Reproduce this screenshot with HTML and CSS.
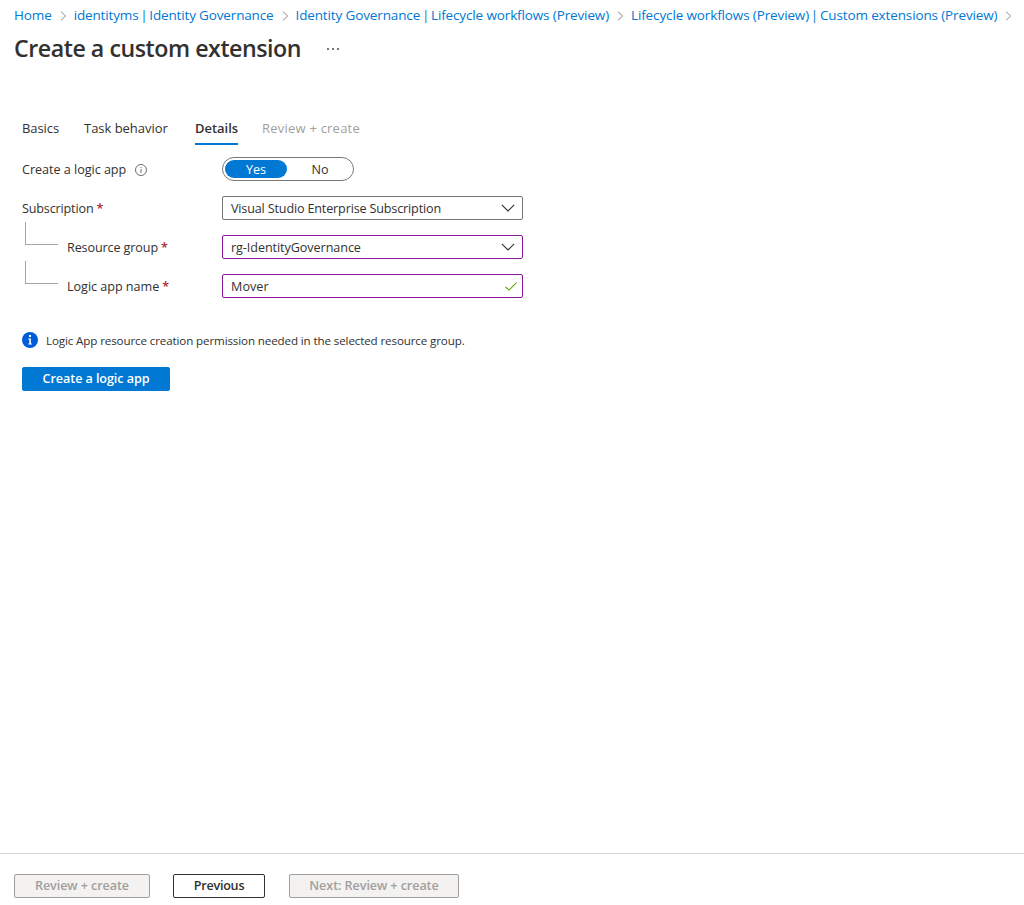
FILE: index.html
```
<!DOCTYPE html>
<html lang="en">
<head>
<meta charset="utf-8">
<title>Create a custom extension</title>
<link rel="stylesheet" href="styles.css">
</head>
<body>
<div class="page">
  <nav class="breadcrumb">
    <a class="crumb crumb-home">Home</a>
    <svg class="sep" viewBox="0 0 7 10"><path d="M1 .7 5.6 5 1 9.3"/></svg>
    <a class="crumb crumb-tenant">identityms <span class="pipe">|</span> Identity Governance</a>
    <svg class="sep" viewBox="0 0 7 10"><path d="M1 .7 5.6 5 1 9.3"/></svg>
    <a class="crumb">Identity Governance <span class="pipe">|</span> Lifecycle workflows (Preview)</a>
    <svg class="sep" viewBox="0 0 7 10"><path d="M1 .7 5.6 5 1 9.3"/></svg>
    <a class="crumb">Lifecycle workflows (Preview) <span class="pipe">|</span> Custom extensions (Preview)</a>
    <svg class="sep" viewBox="0 0 7 10"><path d="M1 .7 5.6 5 1 9.3"/></svg>
  </nav>
  <header class="title-row">
    <h1 class="title">Create a custom extension</h1>
    <svg class="more" viewBox="0 0 12 2"><path d="M0 0h2v2H0zM5 0h2v2H5zM10 0h2v2h-2z"/></svg>
  </header>
  <main class="content">
    <div class="tabs">
      <span class="tab tab-basics">Basics</span>
      <span class="tab tab-task">Task behavior</span>
      <span class="tab tab-details active">Details</span>
      <span class="tab disabled">Review + create</span>
    </div>
    <div class="form">
      <div class="field">
        <div class="label"><span class="t-create">Create a logic app</span>
          <svg class="info-outline" viewBox="0 0 12 12"><circle cx="6" cy="6" r="5.5"/><path d="M6 5v4M6 3v1"/></svg>
        </div>
        <div class="toggle"><span class="option selected">Yes</span><span class="option">No</span></div>
      </div>
      <div class="field">
        <div class="label"><span class="t-tight">Subscription</span><span class="required">*</span></div>
        <div class="select"><span class="t-tight">Visual Studio Enterprise Subscription</span>
          <svg class="chevron" viewBox="0 0 14 8"><path d="M.8.8 7 7 13.2.8"/></svg></div>
      </div>
      <div class="field">
        <div class="label nested"><i class="branch"></i><span class="t-res">Resource group</span><span class="required">*</span></div>
        <div class="select edited"><span class="t-rg">rg-IdentityGovernance</span>
          <svg class="chevron" viewBox="0 0 14 8"><path d="M.8.8 7 7 13.2.8"/></svg></div>
      </div>
      <div class="field">
        <div class="label nested"><i class="branch"></i><span class="t-create">Logic app name</span><span class="required">*</span></div>
        <div class="select edited"><span class="t-mover">Mover</span>
          <svg class="check" viewBox="0 0 12 9"><path d="M.5 4.8 4 8.1 11.5.7"/></svg></div>
      </div>
    </div>
    <div class="notice">
      <svg class="info-solid" viewBox="0 0 16 16"><circle cx="8" cy="8" r="8"/><path d="M6.3 6.4h2.6v5.1h1v1H6.3v-1h1V7.4h-1zM7 3h2v2H7z"/></svg>
      <span>Logic App resource creation permission needed in the selected resource group.</span>
    </div>
    <button class="btn primary">Create a logic app</button>
  </main>
  <footer class="footer">
    <button class="btn muted review">Review + create</button>
    <button class="btn previous">Previous</button>
    <button class="btn muted next">Next: Review + create</button>
  </footer>
</div>
</body>
</html>
```
FILE: styles.css
```
* { box-sizing: border-box; }
body {
  margin: 0;
  background: #fff;
  color: #323130;
  font-family: "Open Sans", "Noto Sans", sans-serif;
  font-size: 12.6px;
  line-height: 18px;
}
svg { display: block; flex: none; fill: none; }
.page { height: 905px; display: flex; flex-direction: column; overflow: hidden; }

.breadcrumb {
  display: flex;
  align-items: center;
  height: 20px;
  margin: 5px 0 0 14px;
  white-space: nowrap;
}
.crumb { color: #0078d4; font-size: 13.5px; letter-spacing: -.13px; }
.crumb-home { letter-spacing: -.12px; }
.crumb-tenant { letter-spacing: -.15px; }
.pipe { margin: 0 -1.6px; }
.sep { width: 7px; height: 10px; margin: 1px 7px 0 8px; stroke: #8a8886; }

.title-row { display: flex; align-items: center; height: 34px; margin: 7px 0 0 14px; }
.title { margin: -2px 0 0; width: 287px; font-size: 23.2px; line-height: 34px; font-weight: 600; letter-spacing: -.46px; white-space: nowrap; }
.more { width: 12px; height: 2px; margin-left: 26px; fill: #797775; }

.content { flex: 1; padding: 52px 22px 0; }
.tabs { display: flex; height: 27px; font-size: 13px; line-height: 20px; white-space: nowrap; }
.tab-basics { width: 62px; letter-spacing: -.09px; }
.tab-task { width: 111px; letter-spacing: -.03px; }
.tab-details { width: 43px; margin-right: 24px; }
.active { font-weight: 600; border-bottom: 2px solid #0078d4; letter-spacing: -.04px; }
.disabled { color: #a19f9d; letter-spacing: .22px; }

.form { display: grid; gap: 15px; margin-top: 12px; }
.field { display: flex; align-items: center; height: 24px; }
.label { width: 200px; height: 24px; display: flex; align-items: center; white-space: nowrap; }
.label span, .select span { padding-top: 2px; }
.nested { padding-left: 3px; }
.branch { width: 33px; height: 23px; margin: -28px 9px 0 0; border: solid #a6a6a6; border-width: 0 0 1px 1px; }
.required { color: #a4262c; margin-left: 3px; font-weight: 600; }
.t-tight { letter-spacing: -.16px; }
.t-create { letter-spacing: -.03px; }
.t-res { letter-spacing: -.12px; }
.t-rg { letter-spacing: -.07px; }
.t-mover { letter-spacing: .05px; }
.info-outline { width: 12px; height: 12px; margin: 1px 0 0 9px; stroke: #605e5c; stroke-width: .9; }

.toggle { width: 132px; height: 24px; padding: 2px; display: flex; border: 1px solid #797775; border-radius: 12px; }
.option { flex: none; width: 62px; height: 18px; line-height: 20px; text-align: center; border-radius: 9px; margin-right: 2px; }
.selected { background: #0078d4; color: #fff; }
.select {
  width: 301px;
  height: 24px;
  padding: 0 8px;
  display: flex;
  align-items: center;
  justify-content: space-between;
  border: 1px solid #797775;
  border-radius: 2px;
  white-space: nowrap;
}
.edited { border-color: #881798; }
.chevron { width: 14px; height: 8px; margin-right: -1px; stroke: #323130; stroke-width: 1.1; }
.check { width: 12px; height: 9px; margin-right: -3px; stroke: #57a300; stroke-width: 1.1; }

.notice { display: flex; align-items: center; gap: 8px; height: 18px; margin-top: 34px; font-size: 11.6px; letter-spacing: -.12px; white-space: nowrap; }
.info-solid { width: 16px; height: 16px; margin-top: -2px; }
.info-solid circle { fill: #015cda; }
.info-solid path { fill: #fff; }

.btn {
  display: block;
  height: 24px;
  padding: 0;
  border: 1px solid #323130;
  border-radius: 2px;
  background: #fff;
  color: #323130;
  font: 600 12.6px/20px "Open Sans", "Noto Sans", sans-serif;
  letter-spacing: -.08px;
  white-space: nowrap;
}
.primary { width: 148px; margin-top: 17px; background: #0078d4; border-color: #0078d4; color: #fff; }
.footer { display: flex; height: 52px; padding: 20px 14px 0; border-top: 1px solid #d6d6d6; }
.muted { background: #f3f2f1; border-color: #a19f9d; color: #a19f9d; }
.review { width: 136px; margin-right: 23px; }
.previous { width: 92px; margin-right: 24px; letter-spacing: -.24px; }
.next { width: 170px; }
```
